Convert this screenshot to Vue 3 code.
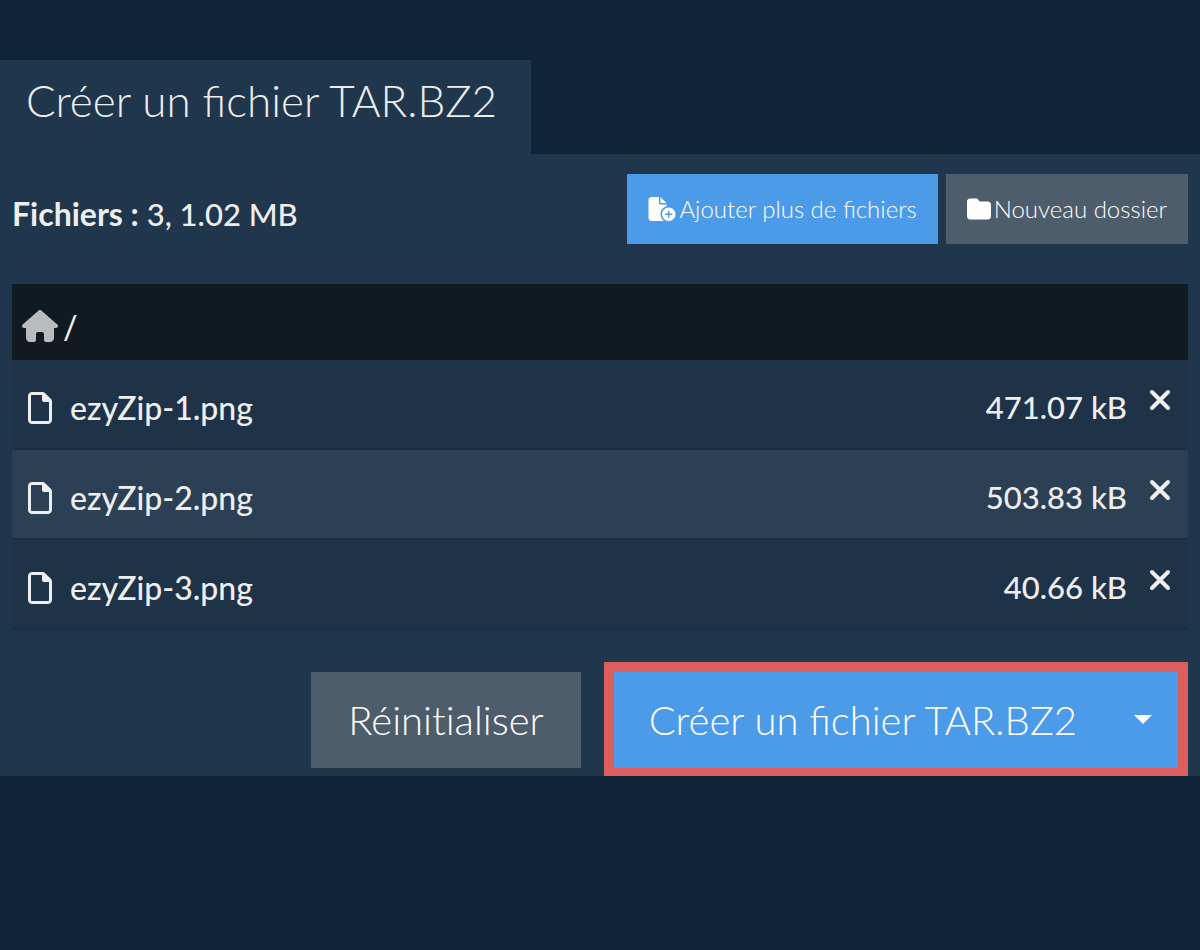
<script setup>
import { ref, computed } from 'vue'

const files = ref([
  { name: 'ezyZip-1.png', size: '471.07 kB' },
  { name: 'ezyZip-2.png', size: '503.83 kB' },
  { name: 'ezyZip-3.png', size: '40.66 kB' }
])
const count = computed(() => files.value.length)
const remove = (i) => files.value.splice(i, 1)
</script>

<template>
  <main class="page">
    <h1 class="tab">Créer un fichier TAR.BZ2</h1>
    <section class="panel">
      <header class="toolbar">
        <p class="summary"><strong>Fichiers :</strong> {{ count }}, 1.02 MB</p>
        <div class="tools">
          <button type="button" class="btn blue small">
            <svg width="28" height="24" viewBox="0 0 576 512" aria-hidden="true"><path fill="#fff" d="M0 64C0 29 29 0 64 0h160v128c0 18 14 32 32 32h128v39c-76 22-128 90-128 169 0 59 29 111 73 143-3 1-6 1-9 1H64c-35 0-64-29-64-64zm384 64H256V0zm48 96a144 144 0 1 1 0 288 144 144 0 0 1 0-288zm16 80c0-9-7-16-16-16s-16 7-16 16v48h-48c-9 0-16 7-16 16s7 16 16 16h48v48c0 9 7 16 16 16s16-7 16-16v-48h48c9 0 16-7 16-16s-7-16-16-16h-48z"/></svg>
            <span>Ajouter plus de fichiers</span>
          </button>
          <button type="button" class="btn grey small">
            <svg width="24" height="24" viewBox="0 0 512 512" aria-hidden="true"><path fill="#fff" d="M64 480h384c35 0 64-29 64-64V160c0-35-29-64-64-64H288c-10 0-20-5-26-13l-19-25C231 41 212 32 192 32H64C29 32 0 61 0 96v320c0 35 29 64 64 64z"/></svg>
            <span>Nouveau dossier</span>
          </button>
        </div>
      </header>
      <nav class="crumbs" aria-label="Chemin">
        <a href="#" aria-label="Accueil"><svg width="36" height="32" viewBox="0 0 576 512" aria-hidden="true"><path fill="#b8bcbf" d="M576 256c0 18-15 32-32 32h-32l1 160c0 35-28 64-64 64h-65c-18 0-32-14-32-32v-96c0-18-14-32-32-32h-64c-18 0-32 14-32 32v96c0 18-14 32-32 32h-64c-35 0-64-29-64-64V288H32c-18 0-32-14-32-32 0-9 3-17 10-24L266 8c7-7 15-8 22-8s15 2 21 7l256 225c8 7 12 15 11 24z"/></svg></a>
        <span>/</span>
      </nav>
      <ul class="files">
        <li v-for="(file, i) in files" :key="file.name">
          <svg class="doc" width="24" height="32" viewBox="0 0 384 512" aria-hidden="true"><path fill="#eee" d="M320 464c9 0 16-7 16-16V160h-80c-18 0-32-14-32-32V48H64c-9 0-16 7-16 16v384c0 9 7 16 16 16zM0 64C0 29 29 0 64 0h165c17 0 34 7 46 19l90 90c12 12 19 29 19 46v293c0 35-29 64-64 64H64c-35 0-64-29-64-64z"/></svg>
          <span class="name">{{ file.name }}</span>
          <span class="size">{{ file.size }}</span>
          <button type="button" class="remove" :aria-label="`Supprimer ${file.name}`" @click="remove(i)">
            <svg width="22" height="22" viewBox="0 0 22 22" aria-hidden="true"><path d="M3 3l16 16m0-16l-16 16" stroke="#eee" stroke-width="4" stroke-linecap="round"/></svg>
          </button>
        </li>
      </ul>
      <footer class="actions">
        <button type="button" class="btn grey large reset">Réinitialiser</button>
        <div class="split">
          <button type="button" class="btn blue large">Créer un fichier TAR.BZ2</button>
          <button type="button" class="btn blue more" aria-label="Plus d’options">
            <svg width="18" height="9" viewBox="0 0 18 9" aria-hidden="true"><path fill="#fff" d="M0 0h18L9 9z"/></svg>
          </button>
        </div>
      </footer>
    </section>
  </main>
</template>

<style>
body {
  background: #0f2437;
}
</style>

<style scoped>
.page {
  padding-top: 60px;
  font-family: Lato, "Liberation Sans", sans-serif;
  color: #eee;
}
.page * {
  box-sizing: border-box;
}
.tab {
  width: fit-content;
  margin: 0;
  padding: 14px 34px 28px 26px;
  background: #20364c;
  font-size: 44px;
  line-height: 52px;
  font-weight: 300;
}
.panel {
  padding: 20px 12px 0;
  background: #20364c;
}
.toolbar {
  display: flex;
  justify-content: space-between;
  align-items: flex-start;
}
.summary {
  margin: 20px 0 0;
  font-size: 31px;
  line-height: 40px;
  font-weight: 500;
}
.summary strong {
  font-size: 32px;
  font-weight: 700;
}
.tools {
  display: flex;
  gap: 8px;
}
.btn {
  display: flex;
  align-items: center;
  justify-content: center;
  border: 0;
  color: #fff;
  font-family: inherit;
  font-weight: 300;
}
.blue {
  background: #4b9be9;
}
.grey {
  background: #4e5d6c;
}
.small {
  gap: 3px;
  height: 70px;
  padding: 0 21px;
  font-size: 24px;
}
.small span {
  padding-bottom: 2px;
}
.crumbs {
  display: flex;
  align-items: center;
  gap: 5px;
  height: 76px;
  margin-top: 40px;
  padding: 8px 10px 0;
  background: #111921;
  font-size: 32px;
  font-weight: 500;
}
.crumbs a {
  display: flex;
}
.files {
  margin: 0;
  padding: 0;
  list-style: none;
  font-size: 32px;
  font-weight: 500;
}
.files li {
  display: flex;
  align-items: center;
  height: 90px;
  padding: 6px 17px 0 16px;
  border-bottom: 2px solid #1b2d3e;
  background: #1f3348;
}
.files li:nth-child(even) {
  background: #2c4055;
}
.doc {
  margin-top: 2px;
}
.name {
  flex: 1;
  margin-left: 18px;
}
.size {
  font-size: 31px;
}
.remove {
  display: flex;
  margin: 0 0 14px 22px;
  padding: 0;
  border: 0;
  background: none;
}
.actions {
  display: flex;
  justify-content: flex-end;
  align-items: flex-start;
  gap: 23px;
  padding-top: 32px;
}
.large {
  height: 96px;
  padding: 0 35px;
  font-size: 40px;
}
.reset {
  margin-top: 10px;
  padding: 0 37px;
  font-variant-ligatures: none;
}
.split {
  display: flex;
  border: 10px solid #dc5e5c;
  border-bottom-width: 8px;
}
.more {
  padding: 0 26px 2px 22px;
}
</style>
